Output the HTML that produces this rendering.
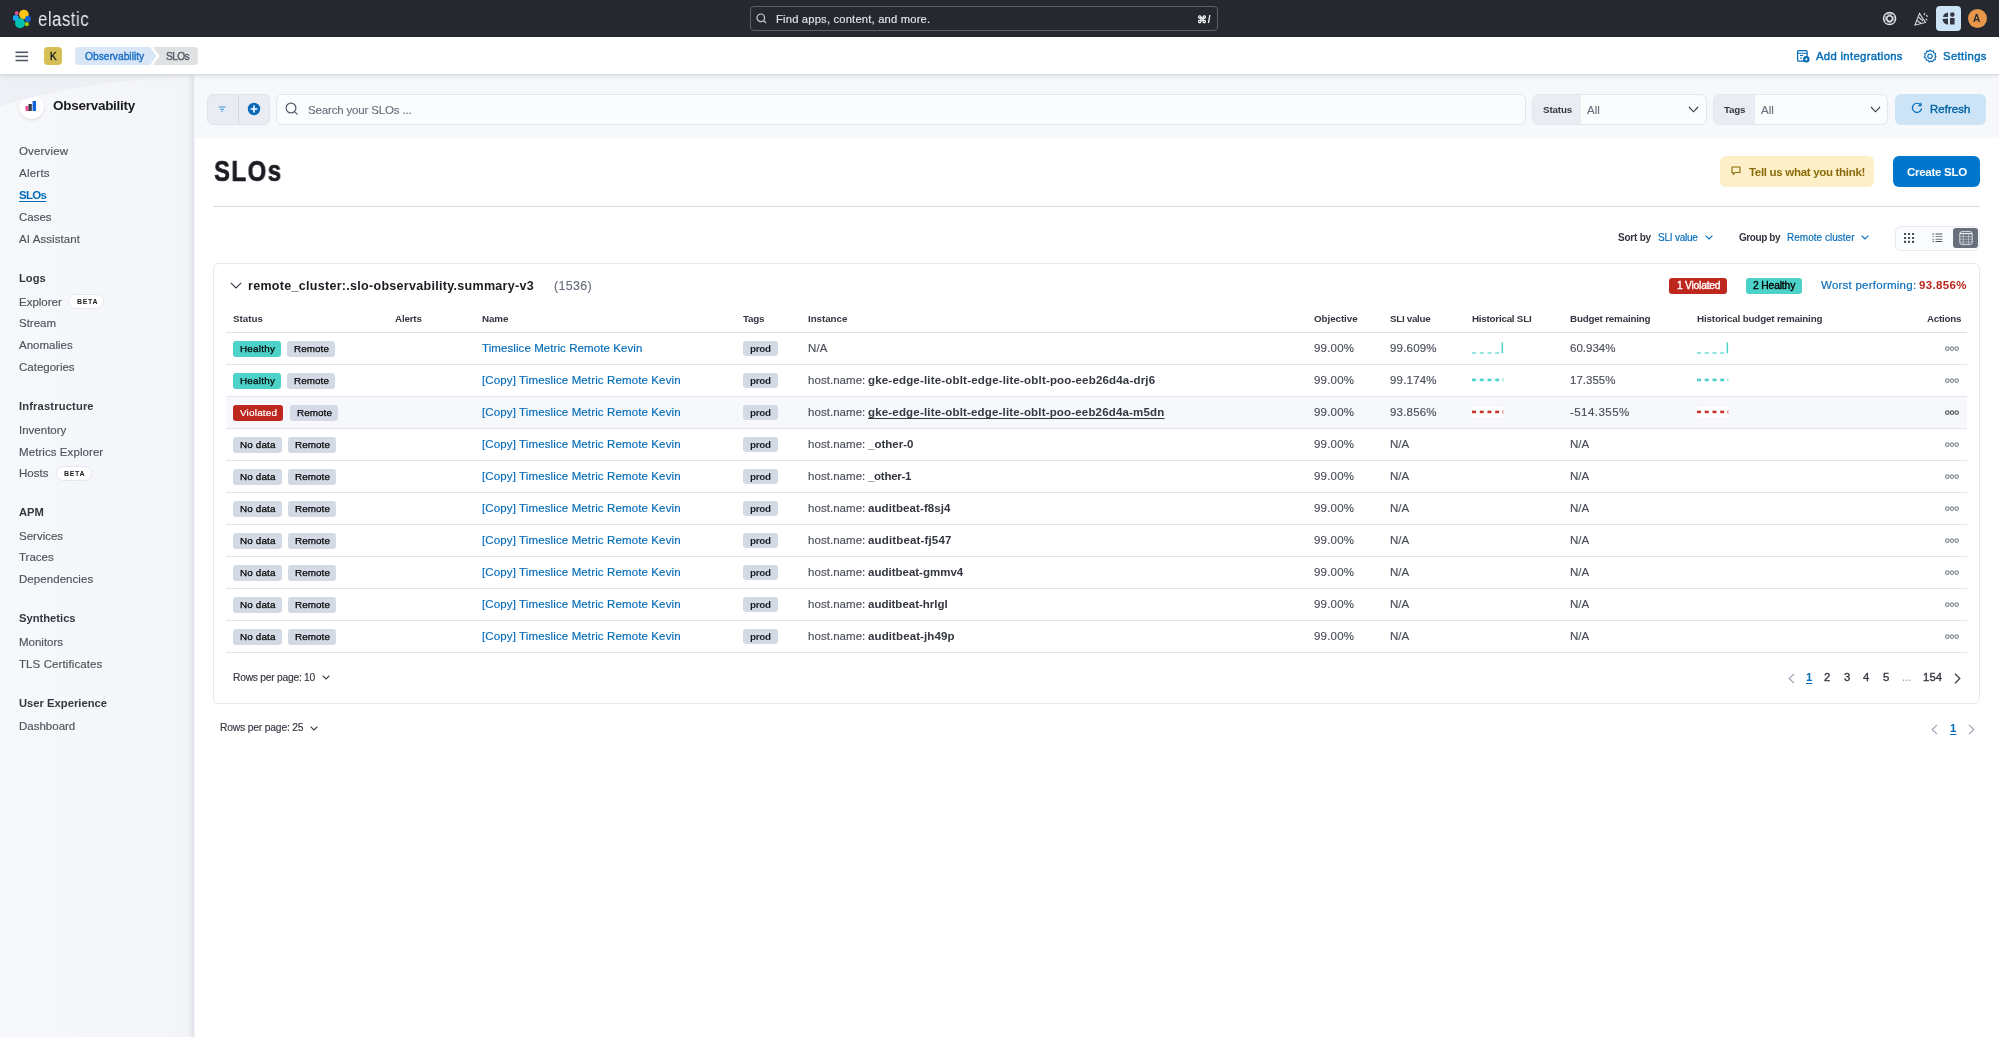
<!DOCTYPE html><html><head><meta charset="utf-8"><title>SLOs</title><style>
html,body{margin:0;padding:0;width:1999px;height:1037px;overflow:hidden;background:#fff;position:relative;font-family:"Liberation Sans",sans-serif;}
.t{position:absolute;line-height:1;white-space:pre;z-index:1;will-change:transform}
svg{z-index:1}
</style></head><body>
<div style="position:absolute;left:0px;top:0px;width:1999px;height:37px;background:#25282f"></div>
<svg style="position:absolute;left:12px;top:9px" width="20" height="20" viewBox="0 0 20 20">
<circle cx="4.7" cy="4.1" r="1.9" fill="#f04e98"/>
<circle cx="11.9" cy="5.5" r="4.8" fill="#fec514"/>
<circle cx="3.8" cy="9" r="3" fill="#1ba9f5"/>
<circle cx="15.9" cy="10" r="2.9" fill="#0b64dd"/>
<circle cx="8" cy="14.2" r="5" fill="#00bfb3"/>
<circle cx="14.8" cy="15.1" r="2.2" fill="#93c90e"/>
</svg>
<div style="position:absolute;left:750px;top:6px;width:468px;height:25px;border:1px solid #5a5f6b;border-radius:4px;box-sizing:border-box;background:#25282f"></div>
<svg style="position:absolute;left:756px;top:13px" width="11" height="11" viewBox="0 0 11 11" fill="none" stroke="#c8ccd3" stroke-width="1.2">
<circle cx="4.8" cy="4.8" r="3.8"/><path d="M7.6 7.6 L10 10"/></svg>
<svg style="position:absolute;left:1882px;top:11px" width="15" height="15" viewBox="0 0 15 15" fill="none" stroke="#dfe2e8">
<circle cx="7.6" cy="7.6" r="6.1" stroke-width="1.3"/><circle cx="7.6" cy="7.6" r="2.9" stroke-width="1.5"/>
<path d="M5.1 3.2 H10.1 M5.1 12 H10.1 M3.2 5.1 V10.1 M12 5.1 V10.1" stroke-width="1" opacity=".8"/></svg>
<svg style="position:absolute;left:1913px;top:11px" width="16" height="16" viewBox="0 0 16 16" fill="none" stroke="#d4d7dc" stroke-width="1.1">
<path d="M2 14 L6.5 2.5 L12.5 11.5 Z"/><path d="M4 9.5 L8.5 12.5 M5.5 6 L10 10"/><path d="M11 2 q1 1 0 2 M13 4 q1.5 .5 1 2 M12.5 8 q1.5 0 1.5 1.5"/></svg>
<div style="position:absolute;left:1936px;top:6px;width:25px;height:25px;background:#cce4f5;border-radius:4px"></div>
<svg style="position:absolute;left:1942px;top:12px" width="14" height="13" viewBox="0 0 14 13">
<path d="M6 0.5 A5.5 5.5 0 0 0 1 5 L6 5 Z" fill="#343741"/>
<path d="M6 6.5 L6 12.5 A5.5 5.5 0 0 1 0.5 7 Z" fill="#343741"/>
<circle cx="10.3" cy="2.6" r="2.3" fill="#343741"/>
<rect x="8" y="6" width="4.6" height="6.6" rx="0.6" fill="#343741"/></svg>
<div style="position:absolute;left:1968px;top:9px;width:19px;height:19px;background:#e7974a;border-radius:50%"></div>
<div style="position:absolute;left:0px;top:37px;width:1999px;height:38px;background:#fff;border-bottom:1px solid #d6dbe5;box-sizing:border-box;box-shadow:0 1px 3px rgba(0,0,0,.07),0 3px 7px rgba(0,0,0,.04);z-index:2"></div>
<svg style="position:absolute;left:15px;top:51px;z-index:3" width="14" height="11" viewBox="0 0 14 11">
<rect x="0.5" y="0.5" width="12.6" height="1.6" fill="#535966"/><rect x="0.5" y="4.6" width="12.6" height="1.6" fill="#535966"/><rect x="0.5" y="8.7" width="12.6" height="1.6" fill="#535966"/></svg>
<div style="position:absolute;left:44px;top:47px;width:18px;height:18px;background:#d6bf57;border-radius:4px;z-index:3"></div>
<svg style="position:absolute;left:75px;top:47px;z-index:3" width="124" height="18" viewBox="0 0 124 18">
<path d="M4 0 H75 L81.5 9 L75 18 H4 A4 4 0 0 1 0 14 V4 A4 4 0 0 1 4 0 Z" fill="#d9e6f5"/>
<path d="M78 0 H119 A4 4 0 0 1 123 4 V14 A4 4 0 0 1 119 18 H78 L84.5 9 Z" fill="#e0e1e3"/></svg>
<svg style="position:absolute;left:1797px;top:50px;z-index:3" width="13" height="13" viewBox="0 0 13 13" fill="none">
<rect x="0.6" y="0.6" width="9.5" height="10.5" rx="1" stroke="#006bb8" stroke-width="1.2"/>
<path d="M0.6 3.2 H10.1 M3 5.5 H6 M3 8 H5" stroke="#006bb8" stroke-width="1.1"/>
<circle cx="9.3" cy="9.3" r="3.2" fill="#006bb8"/><path d="M8 9.3 H10.6 M9.3 8 V10.6" stroke="#fff" stroke-width="0.9"/></svg>
<svg style="position:absolute;left:1923px;top:49px;z-index:3" width="14" height="14" viewBox="0 0 14 14" fill="none" stroke="#006bb8" stroke-width="1.1">
<path d="M7 1 L8.4 2.4 L10.3 2 L10.8 3.9 L12.6 4.6 L12 6.5 L13 7.5 L12 8.8 L12.4 10.6 L10.5 11 L9.6 12.8 L7.8 12 L6.2 12.9 L5.2 11.2 L3.3 11.2 L3 9.3 L1.3 8.3 L2.2 6.6 L1.6 4.8 L3.4 4 L3.8 2.1 L5.7 2.4 Z" stroke-linejoin="round"/>
<circle cx="7" cy="7.2" r="2.2"/></svg>
<div style="position:absolute;left:0px;top:74px;width:195px;height:963px;background:linear-gradient(to right,#f7f8fc 0,#f4f5f9 187px,#e9ebf0 191px,#dfe3ea 193.5px,#fff 195px)"></div>
<svg style="position:absolute;left:0;top:74px" width="193" height="60" viewBox="0 0 193 60">
<path d="M0 0 H193 V2 C120 5 60 15 0 32 Z" fill="#eef0f6"/></svg>
<div style="position:absolute;left:18.5px;top:93.5px;width:25px;height:25px;background:#fff;border-radius:50%;box-shadow:0 1px 3px rgba(0,0,0,.12)"></div>
<svg style="position:absolute;left:24px;top:99px" width="14" height="14" viewBox="0 0 14 14">
<rect x="1.5" y="7" width="3" height="5" fill="#f04e98"/><rect x="4.5" y="5" width="3.3" height="7" fill="#343741"/><rect x="8.6" y="2" width="3.4" height="10" fill="#0b64dd"/></svg>
<div style="position:absolute;left:68.2px;top:294.1px;width:36px;height:15px;background:#fff;border:1px solid #e3e8f2;border-radius:8px;box-sizing:border-box"></div>
<div style="position:absolute;left:55.9px;top:465.7px;width:36px;height:15px;background:#fff;border:1px solid #e3e8f2;border-radius:8px;box-sizing:border-box"></div>
<div style="position:absolute;left:195px;top:74px;width:1804px;height:64px;background:#f7f8fc"></div>
<div style="position:absolute;left:207px;top:94px;width:63px;height:31px;background:#e9edf3;border:1px solid #dfe3ec;border-radius:6px;box-sizing:border-box"></div>
<div style="position:absolute;left:238px;top:95px;width:1px;height:29px;background:#d3dae6"></div>
<svg style="position:absolute;left:217px;top:104px" width="10" height="10" viewBox="0 0 10 10" stroke="#0077cc" stroke-width="1.1" opacity=".75">
<path d="M1.5 3 H8.5 M3 5.2 H7 M4.4 7.4 H5.6"/></svg>
<svg style="position:absolute;left:247px;top:102px" width="14" height="14" viewBox="0 0 14 14">
<circle cx="7" cy="7" r="6.2" fill="#0a69b8"/><path d="M3.6 7 H10.4 M7 3.6 V10.4" stroke="#fff" stroke-width="1.6"/></svg>
<div style="position:absolute;left:276px;top:94px;width:1250px;height:31px;background:#fbfcfd;border:1px solid #e3e6ee;border-radius:6px;box-sizing:border-box"></div>
<svg style="position:absolute;left:285px;top:102px" width="14" height="14" viewBox="0 0 14 14" fill="none" stroke="#535966" stroke-width="1.2">
<circle cx="6" cy="6" r="4.9"/><path d="M9.6 9.6 L12.6 12.6"/></svg>
<div style="position:absolute;left:1532px;top:94px;width:175px;height:31px;background:#fbfcfd;border:1px solid #e3e6ee;border-radius:6px;box-sizing:border-box;overflow:hidden"></div>
<div style="position:absolute;left:1533px;top:95px;width:48px;height:29px;background:#e9edf3;border-radius:5px 0 0 5px"></div>
<svg style="position:absolute;left:1688px;top:106px" width="11" height="7" viewBox="0 0 11 7" fill="none" stroke="#343741" stroke-width="1.1"><path d="M1 1 L5.5 5.8 L10 1"/></svg>
<div style="position:absolute;left:1713px;top:94px;width:175px;height:31px;background:#fbfcfd;border:1px solid #e3e6ee;border-radius:6px;box-sizing:border-box"></div>
<div style="position:absolute;left:1714px;top:95px;width:40.5px;height:29px;background:#e9edf3;border-radius:5px 0 0 5px"></div>
<svg style="position:absolute;left:1869.5px;top:106px" width="11" height="7" viewBox="0 0 11 7" fill="none" stroke="#343741" stroke-width="1.1"><path d="M1 1 L5.5 5.8 L10 1"/></svg>
<div style="position:absolute;left:1895px;top:94px;width:91px;height:31px;background:#cce4f5;border-radius:6px"></div>
<svg style="position:absolute;left:1911px;top:102px" width="12" height="12" viewBox="0 0 12 12" fill="none" stroke="#006bb8" stroke-width="1.2">
<path d="M9.8 3.2 A4.6 4.6 0 1 0 10.6 6.4"/><path d="M10 0.8 V3.6 H7.3"/></svg>
<div style="position:absolute;left:1720px;top:156px;width:154px;height:31px;background:#fdf0c8;border-radius:6px"></div>
<svg style="position:absolute;left:1731px;top:166px" width="10" height="10" viewBox="0 0 10 10" fill="none" stroke="#8a6a0a" stroke-width="1.1">
<path d="M1 1 H9 V6.5 H4 L2.2 8.6 V6.5 H1 Z" stroke-linejoin="round"/></svg>
<div style="position:absolute;left:1893px;top:156px;width:87px;height:31px;background:#0077cc;border-radius:6px"></div>
<div style="position:absolute;left:213px;top:206px;width:1767px;height:1px;background:#d8dee7"></div>
<svg style="position:absolute;left:1705px;top:235px" width="8" height="5" viewBox="0 0 8 5" fill="none" stroke="#006bb8" stroke-width="1.1"><path d="M0.6 0.6 L4 4 L7.4 0.6"/></svg>
<svg style="position:absolute;left:1861px;top:235px" width="8" height="5" viewBox="0 0 8 5" fill="none" stroke="#006bb8" stroke-width="1.1"><path d="M0.6 0.6 L4 4 L7.4 0.6"/></svg>
<div style="position:absolute;left:1895px;top:225.5px;width:85px;height:25px;background:#fbfcfd;border:1px solid #e6e9ef;border-radius:6px;box-sizing:border-box"></div>
<div style="position:absolute;left:1953px;top:228px;width:24.5px;height:20px;background:#69707d;border-radius:3px"></div>
<svg style="position:absolute;left:1903px;top:232px" width="12" height="12" viewBox="0 0 12 12" fill="#4a4e58">
<rect x="1" y="1" width="2.1" height="2.1" rx=".3"/><rect x="5" y="1" width="2.1" height="2.1" rx=".3"/><rect x="9" y="1" width="2.1" height="2.1" rx=".3"/>
<rect x="1" y="4.9" width="2.1" height="2.1" rx=".3"/><rect x="5" y="4.9" width="2.1" height="2.1" rx=".3"/><rect x="9" y="4.9" width="2.1" height="2.1" rx=".3"/>
<rect x="1" y="8.8" width="2.1" height="2.1" rx=".3"/><rect x="5" y="8.8" width="2.1" height="2.1" rx=".3"/><rect x="9" y="8.8" width="2.1" height="2.1" rx=".3"/></svg>
<svg style="position:absolute;left:1932px;top:232px" width="11" height="11" viewBox="0 0 11 11" fill="#4a4e58">
<rect x="0.3" y="1.6" width="1.8" height="1" rx=".4"/><rect x="3.4" y="1.6" width="7" height="1" rx=".4"/>
<rect x="0.3" y="4" width="1.8" height="1" rx=".4" opacity=".7"/><rect x="3.4" y="4" width="7" height="1" rx=".4" opacity=".7"/>
<rect x="0.3" y="6.8" width="1.8" height="1" rx=".4" opacity=".8"/><rect x="3.4" y="6.8" width="7" height="1" rx=".4" opacity=".8"/>
<rect x="0.3" y="9" width="1.8" height="1" rx=".4"/><rect x="3.4" y="9" width="7" height="1" rx=".4"/></svg>
<svg style="position:absolute;left:1958.5px;top:231px" width="14" height="14" viewBox="0 0 14 14" fill="none" stroke="#e8eaee" stroke-width=".9">
<rect x="0.8" y="0.6" width="12.4" height="12.8" rx="2.2"/><path d="M0.8 2.6 H13.2" stroke-width="1.2"/>
<path d="M0.8 5.5 H13.2 M0.8 8.2 H13.2 M0.8 11 H13.2 M4.4 2.6 V13.4 M9.6 2.6 V13.4" opacity=".55"/></svg>
<div style="position:absolute;left:213px;top:263px;width:767px;height:441px;display:none"></div>
<div style="position:absolute;left:213px;top:263px;width:1767px;height:441px;border:1px solid #e3e8f2;border-radius:6px;box-sizing:border-box;background:#fff"></div>
<svg style="position:absolute;left:230px;top:282px" width="12" height="7" viewBox="0 0 12 7" fill="none" stroke="#343741" stroke-width="1.1"><path d="M0.8 0.8 L6 6 L11.2 0.8"/></svg>
<div style="position:absolute;left:1669.4px;top:278px;width:58px;height:15.7px;background:#bd271e;border-radius:3px"></div>
<div style="position:absolute;left:1746px;top:278px;width:56px;height:15.7px;background:#4dd2ca;border-radius:3px"></div>
<div style="position:absolute;left:226px;top:332px;width:1741px;height:1px;background:#dce1ea"></div>
<div style="position:absolute;left:226px;top:364px;width:1741px;height:1px;background:#e1e6ee"></div>
<div style="position:absolute;left:232.5px;top:341px;width:48.5px;height:15.7px;background:#4dd2ca;border-radius:3px"></div>
<div style="position:absolute;left:287.2px;top:341px;width:48.3px;height:15.7px;background:#d3dae6;border-radius:3px"></div>
<div style="position:absolute;left:743px;top:340.8px;width:34.5px;height:15.5px;background:#d3dae6;border-radius:3px"></div>
<svg style="position:absolute;left:1472px;top:333px" width="34" height="31" viewBox="0 0 34 31"><rect x="0.00" y="19" width="4" height="2" fill="#4dd2ca" opacity=".6"/><rect x="7.73" y="19" width="4" height="2" fill="#4dd2ca" opacity=".6"/><rect x="15.46" y="19" width="4" height="2" fill="#4dd2ca" opacity=".6"/><rect x="23.19" y="19" width="4" height="2" fill="#4dd2ca" opacity=".6"/><rect x="29.6" y="9.4" width="1.5" height="11" fill="#4dd2ca"/></svg>
<svg style="position:absolute;left:1697.4px;top:333px" width="34" height="31" viewBox="0 0 34 31"><rect x="0.00" y="19" width="4" height="2" fill="#4dd2ca" opacity=".6"/><rect x="7.73" y="19" width="4" height="2" fill="#4dd2ca" opacity=".6"/><rect x="15.46" y="19" width="4" height="2" fill="#4dd2ca" opacity=".6"/><rect x="23.19" y="19" width="4" height="2" fill="#4dd2ca" opacity=".6"/><rect x="29.6" y="9.4" width="1.5" height="11" fill="#4dd2ca"/></svg>
<svg style="position:absolute;left:1944.5px;top:346px" width="14" height="6" viewBox="0 0 14 6" fill="none" stroke="#69707d" stroke-width="1">
<rect x="0.7" y="1" width="3.2" height="3.2" rx=".6"/><rect x="5.4" y="1" width="3.2" height="3.2" rx=".6"/><rect x="10.1" y="1" width="3.2" height="3.2" rx=".6"/></svg>
<div style="position:absolute;left:226px;top:396px;width:1741px;height:1px;background:#e1e6ee"></div>
<div style="position:absolute;left:232.5px;top:373px;width:48.5px;height:15.7px;background:#4dd2ca;border-radius:3px"></div>
<div style="position:absolute;left:287.2px;top:373px;width:48.3px;height:15.7px;background:#d3dae6;border-radius:3px"></div>
<div style="position:absolute;left:743px;top:372.8px;width:34.5px;height:15.5px;background:#d3dae6;border-radius:3px"></div>
<svg style="position:absolute;left:1472px;top:365px" width="34" height="31" viewBox="0 0 34 31"><rect x="0.00" y="13.6" width="4" height="2.6" fill="#4dd2ca"/><rect x="7.73" y="13.6" width="4" height="2.6" fill="#4dd2ca"/><rect x="15.46" y="13.6" width="4" height="2.6" fill="#4dd2ca"/><rect x="23.19" y="13.6" width="4" height="2.6" fill="#4dd2ca"/><path d="M31.3 13.2 Q29.6 14.9 31.3 16.6" stroke="#4dd2ca" stroke-width="1" fill="none" opacity=".7"/></svg>
<svg style="position:absolute;left:1697.4px;top:365px" width="34" height="31" viewBox="0 0 34 31"><rect x="0.00" y="13.6" width="4" height="2.6" fill="#4dd2ca"/><rect x="7.73" y="13.6" width="4" height="2.6" fill="#4dd2ca"/><rect x="15.46" y="13.6" width="4" height="2.6" fill="#4dd2ca"/><rect x="23.19" y="13.6" width="4" height="2.6" fill="#4dd2ca"/><path d="M31.3 13.2 Q29.6 14.9 31.3 16.6" stroke="#4dd2ca" stroke-width="1" fill="none" opacity=".7"/></svg>
<svg style="position:absolute;left:1944.5px;top:378px" width="14" height="6" viewBox="0 0 14 6" fill="none" stroke="#69707d" stroke-width="1">
<rect x="0.7" y="1" width="3.2" height="3.2" rx=".6"/><rect x="5.4" y="1" width="3.2" height="3.2" rx=".6"/><rect x="10.1" y="1" width="3.2" height="3.2" rx=".6"/></svg>
<div style="position:absolute;left:226px;top:397px;width:1741px;height:31px;background:#f7f8fc"></div>
<div style="position:absolute;left:226px;top:428px;width:1741px;height:1px;background:#e1e6ee"></div>
<div style="position:absolute;left:232.5px;top:405px;width:50.5px;height:15.7px;background:#bd271e;border-radius:3px"></div>
<div style="position:absolute;left:290px;top:405px;width:48.3px;height:15.7px;background:#d3dae6;border-radius:3px"></div>
<div style="position:absolute;left:743px;top:404.8px;width:34.5px;height:15.5px;background:#d3dae6;border-radius:3px"></div>
<svg style="position:absolute;left:1472px;top:397px" width="34" height="31" viewBox="0 0 34 31"><rect x="0" y="9.8" width="31.5" height="10.7" fill="#fff"/><rect x="0.00" y="13.6" width="4" height="2.6" fill="#c9372c"/><rect x="7.73" y="13.6" width="4" height="2.6" fill="#c9372c"/><rect x="15.46" y="13.6" width="4" height="2.6" fill="#c9372c"/><rect x="23.19" y="13.6" width="4" height="2.6" fill="#c9372c"/><path d="M31.3 13.2 Q29.6 14.9 31.3 16.6" stroke="#c9372c" stroke-width="1" fill="none" opacity=".7"/></svg>
<svg style="position:absolute;left:1697.4px;top:397px" width="34" height="31" viewBox="0 0 34 31"><rect x="0" y="9.8" width="31.5" height="10.7" fill="#fff"/><rect x="0.00" y="13.6" width="4" height="2.6" fill="#c9372c"/><rect x="7.73" y="13.6" width="4" height="2.6" fill="#c9372c"/><rect x="15.46" y="13.6" width="4" height="2.6" fill="#c9372c"/><rect x="23.19" y="13.6" width="4" height="2.6" fill="#c9372c"/><path d="M31.3 13.2 Q29.6 14.9 31.3 16.6" stroke="#c9372c" stroke-width="1" fill="none" opacity=".7"/></svg>
<svg style="position:absolute;left:1944.5px;top:410px" width="14" height="6" viewBox="0 0 14 6" fill="none" stroke="#343741" stroke-width="1">
<rect x="0.7" y="1" width="3.2" height="3.2" rx=".6"/><rect x="5.4" y="1" width="3.2" height="3.2" rx=".6"/><rect x="10.1" y="1" width="3.2" height="3.2" rx=".6"/></svg>
<div style="position:absolute;left:226px;top:460px;width:1741px;height:1px;background:#e1e6ee"></div>
<div style="position:absolute;left:232.5px;top:437px;width:49px;height:15.7px;background:#d3dae6;border-radius:3px"></div>
<div style="position:absolute;left:287.9px;top:437px;width:48.3px;height:15.7px;background:#d3dae6;border-radius:3px"></div>
<div style="position:absolute;left:743px;top:436.8px;width:34.5px;height:15.5px;background:#d3dae6;border-radius:3px"></div>
<svg style="position:absolute;left:1944.5px;top:442px" width="14" height="6" viewBox="0 0 14 6" fill="none" stroke="#69707d" stroke-width="1">
<rect x="0.7" y="1" width="3.2" height="3.2" rx=".6"/><rect x="5.4" y="1" width="3.2" height="3.2" rx=".6"/><rect x="10.1" y="1" width="3.2" height="3.2" rx=".6"/></svg>
<div style="position:absolute;left:226px;top:492px;width:1741px;height:1px;background:#e1e6ee"></div>
<div style="position:absolute;left:232.5px;top:469px;width:49px;height:15.7px;background:#d3dae6;border-radius:3px"></div>
<div style="position:absolute;left:287.9px;top:469px;width:48.3px;height:15.7px;background:#d3dae6;border-radius:3px"></div>
<div style="position:absolute;left:743px;top:468.8px;width:34.5px;height:15.5px;background:#d3dae6;border-radius:3px"></div>
<svg style="position:absolute;left:1944.5px;top:474px" width="14" height="6" viewBox="0 0 14 6" fill="none" stroke="#69707d" stroke-width="1">
<rect x="0.7" y="1" width="3.2" height="3.2" rx=".6"/><rect x="5.4" y="1" width="3.2" height="3.2" rx=".6"/><rect x="10.1" y="1" width="3.2" height="3.2" rx=".6"/></svg>
<div style="position:absolute;left:226px;top:524px;width:1741px;height:1px;background:#e1e6ee"></div>
<div style="position:absolute;left:232.5px;top:501px;width:49px;height:15.7px;background:#d3dae6;border-radius:3px"></div>
<div style="position:absolute;left:287.9px;top:501px;width:48.3px;height:15.7px;background:#d3dae6;border-radius:3px"></div>
<div style="position:absolute;left:743px;top:500.8px;width:34.5px;height:15.5px;background:#d3dae6;border-radius:3px"></div>
<svg style="position:absolute;left:1944.5px;top:506px" width="14" height="6" viewBox="0 0 14 6" fill="none" stroke="#69707d" stroke-width="1">
<rect x="0.7" y="1" width="3.2" height="3.2" rx=".6"/><rect x="5.4" y="1" width="3.2" height="3.2" rx=".6"/><rect x="10.1" y="1" width="3.2" height="3.2" rx=".6"/></svg>
<div style="position:absolute;left:226px;top:556px;width:1741px;height:1px;background:#e1e6ee"></div>
<div style="position:absolute;left:232.5px;top:533px;width:49px;height:15.7px;background:#d3dae6;border-radius:3px"></div>
<div style="position:absolute;left:287.9px;top:533px;width:48.3px;height:15.7px;background:#d3dae6;border-radius:3px"></div>
<div style="position:absolute;left:743px;top:532.8px;width:34.5px;height:15.5px;background:#d3dae6;border-radius:3px"></div>
<svg style="position:absolute;left:1944.5px;top:538px" width="14" height="6" viewBox="0 0 14 6" fill="none" stroke="#69707d" stroke-width="1">
<rect x="0.7" y="1" width="3.2" height="3.2" rx=".6"/><rect x="5.4" y="1" width="3.2" height="3.2" rx=".6"/><rect x="10.1" y="1" width="3.2" height="3.2" rx=".6"/></svg>
<div style="position:absolute;left:226px;top:588px;width:1741px;height:1px;background:#e1e6ee"></div>
<div style="position:absolute;left:232.5px;top:565px;width:49px;height:15.7px;background:#d3dae6;border-radius:3px"></div>
<div style="position:absolute;left:287.9px;top:565px;width:48.3px;height:15.7px;background:#d3dae6;border-radius:3px"></div>
<div style="position:absolute;left:743px;top:564.8px;width:34.5px;height:15.5px;background:#d3dae6;border-radius:3px"></div>
<svg style="position:absolute;left:1944.5px;top:570px" width="14" height="6" viewBox="0 0 14 6" fill="none" stroke="#69707d" stroke-width="1">
<rect x="0.7" y="1" width="3.2" height="3.2" rx=".6"/><rect x="5.4" y="1" width="3.2" height="3.2" rx=".6"/><rect x="10.1" y="1" width="3.2" height="3.2" rx=".6"/></svg>
<div style="position:absolute;left:226px;top:620px;width:1741px;height:1px;background:#e1e6ee"></div>
<div style="position:absolute;left:232.5px;top:597px;width:49px;height:15.7px;background:#d3dae6;border-radius:3px"></div>
<div style="position:absolute;left:287.9px;top:597px;width:48.3px;height:15.7px;background:#d3dae6;border-radius:3px"></div>
<div style="position:absolute;left:743px;top:596.8px;width:34.5px;height:15.5px;background:#d3dae6;border-radius:3px"></div>
<svg style="position:absolute;left:1944.5px;top:602px" width="14" height="6" viewBox="0 0 14 6" fill="none" stroke="#69707d" stroke-width="1">
<rect x="0.7" y="1" width="3.2" height="3.2" rx=".6"/><rect x="5.4" y="1" width="3.2" height="3.2" rx=".6"/><rect x="10.1" y="1" width="3.2" height="3.2" rx=".6"/></svg>
<div style="position:absolute;left:226px;top:652px;width:1741px;height:1px;background:#e1e6ee"></div>
<div style="position:absolute;left:232.5px;top:629px;width:49px;height:15.7px;background:#d3dae6;border-radius:3px"></div>
<div style="position:absolute;left:287.9px;top:629px;width:48.3px;height:15.7px;background:#d3dae6;border-radius:3px"></div>
<div style="position:absolute;left:743px;top:628.8px;width:34.5px;height:15.5px;background:#d3dae6;border-radius:3px"></div>
<svg style="position:absolute;left:1944.5px;top:634px" width="14" height="6" viewBox="0 0 14 6" fill="none" stroke="#69707d" stroke-width="1">
<rect x="0.7" y="1" width="3.2" height="3.2" rx=".6"/><rect x="5.4" y="1" width="3.2" height="3.2" rx=".6"/><rect x="10.1" y="1" width="3.2" height="3.2" rx=".6"/></svg>
<svg style="position:absolute;left:321.5px;top:675px" width="8" height="5" viewBox="0 0 8 5" fill="none" stroke="#343741" stroke-width="1.1"><path d="M0.6 0.6 L4 4 L7.4 0.6"/></svg>
<svg style="position:absolute;left:1787.5px;top:672.5px" width="7" height="11" viewBox="0 0 7 11" fill="none" stroke="#98a1b3" stroke-width="1.1"><path d="M6 0.8 L1.2 5.5 L6 10.2"/></svg>
<svg style="position:absolute;left:1954px;top:672.5px" width="7" height="11" viewBox="0 0 7 11" fill="none" stroke="#343741" stroke-width="1.2"><path d="M1 0.8 L5.8 5.5 L1 10.2"/></svg>
<svg style="position:absolute;left:309.5px;top:726px" width="8" height="5" viewBox="0 0 8 5" fill="none" stroke="#343741" stroke-width="1.1"><path d="M0.6 0.6 L4 4 L7.4 0.6"/></svg>
<svg style="position:absolute;left:1931px;top:723.5px" width="7" height="11" viewBox="0 0 7 11" fill="none" stroke="#98a1b3" stroke-width="1.1"><path d="M6 0.8 L1.2 5.5 L6 10.2"/></svg>
<svg style="position:absolute;left:1967.5px;top:723.5px" width="7" height="11" viewBox="0 0 7 11" fill="none" stroke="#98a1b3" stroke-width="1.1"><path d="M1 0.8 L5.8 5.5 L1 10.2"/></svg>
<div class="t" id="t0" style="left:37.80px;top:8px;line-height:22px;font-size:20px;font-weight:400;color:#e8ebf0;letter-spacing:0.590px;transform:scaleX(0.84);transform-origin:0 0;-webkit-text-stroke:0 #fff">elastic</div>
<div class="t" id="t1" style="left:775.50px;top:13px;line-height:12px;font-size:11.2px;font-weight:400;color:#dfe5ef;letter-spacing:0.195px;-webkit-text-stroke:0.15px currentColor;">Find apps, content, and more.</div>
<div class="t" id="t2" style="left:1197.00px;top:14px;line-height:11px;font-size:10px;font-weight:700;color:#ffffff;letter-spacing:0.806px;">⌘/</div>
<div class="t" id="t3" style="left:1973.20px;top:13px;line-height:11px;font-size:10px;font-weight:700;color:#25282f;">A</div>
<div class="t" id="t4" style="left:50.20px;top:51px;line-height:11px;font-size:10px;font-weight:400;color:#1a1c21;z-index:3;-webkit-text-stroke:0.35px currentColor">K</div>
<div class="t" id="t5" style="left:84.75px;top:51px;line-height:11px;font-size:10.2px;font-weight:400;color:#1a6fc7;letter-spacing:0.022px;z-index:3;-webkit-text-stroke:0.4px currentColor">Observability</div>
<div class="t" id="t6" style="left:165.80px;top:51px;line-height:11px;font-size:10.2px;font-weight:400;color:#535966;letter-spacing:-0.663px;z-index:3;-webkit-text-stroke:0.4px currentColor">SLOs</div>
<div class="t" id="t7" style="left:1816.20px;top:50px;line-height:12px;font-size:11.3px;font-weight:400;color:#006bb8;letter-spacing:0.324px;z-index:3;-webkit-text-stroke:0.4px currentColor">Add integrations</div>
<div class="t" id="t8" style="left:1943.20px;top:50px;line-height:12px;font-size:11.3px;font-weight:400;color:#006bb8;letter-spacing:0.382px;z-index:3;-webkit-text-stroke:0.4px currentColor">Settings</div>
<div class="t" id="t9" style="left:53.30px;top:98px;line-height:15px;font-size:13.5px;font-weight:700;color:#1a1c21;letter-spacing:-0.270px;">Observability</div>
<div class="t" id="t10" style="left:18.80px;top:145px;line-height:12px;font-size:11.5px;font-weight:400;color:#4d525c;letter-spacing:0.151px;-webkit-text-stroke:0.15px currentColor;">Overview</div>
<div class="t" id="t11" style="left:18.80px;top:167px;line-height:12px;font-size:11.5px;font-weight:400;color:#4d525c;letter-spacing:0.238px;-webkit-text-stroke:0.15px currentColor;">Alerts</div>
<div class="t" id="t12" style="left:18.80px;top:189px;line-height:12px;font-size:11.5px;font-weight:700;color:#006bb8;letter-spacing:-0.681px;text-decoration:underline;text-underline-offset:2px">SLOs</div>
<div class="t" id="t13" style="left:18.80px;top:211px;line-height:12px;font-size:11.5px;font-weight:400;color:#4d525c;-webkit-text-stroke:0.15px currentColor;">Cases</div>
<div class="t" id="t14" style="left:18.80px;top:233px;line-height:12px;font-size:11.5px;font-weight:400;color:#4d525c;letter-spacing:0.082px;-webkit-text-stroke:0.15px currentColor;">AI Assistant</div>
<div class="t" id="t15" style="left:18.80px;top:272px;line-height:12px;font-size:11.2px;font-weight:700;color:#343741;">Logs</div>
<div class="t" id="t16" style="left:18.80px;top:296px;line-height:12px;font-size:11.5px;font-weight:400;color:#4d525c;-webkit-text-stroke:0.15px currentColor;">Explorer</div>
<div class="t" id="t17" style="left:18.80px;top:317px;line-height:12px;font-size:11.5px;font-weight:400;color:#4d525c;-webkit-text-stroke:0.15px currentColor;">Stream</div>
<div class="t" id="t18" style="left:18.80px;top:339px;line-height:12px;font-size:11.5px;font-weight:400;color:#4d525c;-webkit-text-stroke:0.15px currentColor;">Anomalies</div>
<div class="t" id="t19" style="left:18.80px;top:361px;line-height:12px;font-size:11.5px;font-weight:400;color:#4d525c;-webkit-text-stroke:0.15px currentColor;">Categories</div>
<div class="t" id="t20" style="left:18.80px;top:400px;line-height:12px;font-size:11.2px;font-weight:700;color:#343741;letter-spacing:0.143px;">Infrastructure</div>
<div class="t" id="t21" style="left:18.80px;top:424px;line-height:12px;font-size:11.5px;font-weight:400;color:#4d525c;-webkit-text-stroke:0.15px currentColor;">Inventory</div>
<div class="t" id="t22" style="left:18.80px;top:446px;line-height:12px;font-size:11.5px;font-weight:400;color:#4d525c;letter-spacing:0.075px;-webkit-text-stroke:0.15px currentColor;">Metrics Explorer</div>
<div class="t" id="t23" style="left:18.80px;top:467px;line-height:12px;font-size:11.5px;font-weight:400;color:#4d525c;-webkit-text-stroke:0.15px currentColor;">Hosts</div>
<div class="t" id="t24" style="left:18.80px;top:506px;line-height:12px;font-size:11.2px;font-weight:700;color:#343741;">APM</div>
<div class="t" id="t25" style="left:18.80px;top:530px;line-height:12px;font-size:11.5px;font-weight:400;color:#4d525c;-webkit-text-stroke:0.15px currentColor;">Services</div>
<div class="t" id="t26" style="left:18.80px;top:551px;line-height:12px;font-size:11.5px;font-weight:400;color:#4d525c;-webkit-text-stroke:0.15px currentColor;">Traces</div>
<div class="t" id="t27" style="left:18.80px;top:573px;line-height:12px;font-size:11.5px;font-weight:400;color:#4d525c;letter-spacing:0.061px;-webkit-text-stroke:0.15px currentColor;">Dependencies</div>
<div class="t" id="t28" style="left:18.80px;top:612px;line-height:12px;font-size:11.2px;font-weight:700;color:#343741;">Synthetics</div>
<div class="t" id="t29" style="left:18.80px;top:636px;line-height:12px;font-size:11.5px;font-weight:400;color:#4d525c;-webkit-text-stroke:0.15px currentColor;">Monitors</div>
<div class="t" id="t30" style="left:18.80px;top:658px;line-height:12px;font-size:11.5px;font-weight:400;color:#4d525c;letter-spacing:0.100px;-webkit-text-stroke:0.15px currentColor;">TLS Certificates</div>
<div class="t" id="t31" style="left:18.80px;top:697px;line-height:12px;font-size:11.2px;font-weight:700;color:#343741;letter-spacing:0.026px;">User Experience</div>
<div class="t" id="t32" style="left:18.80px;top:720px;line-height:12px;font-size:11.5px;font-weight:400;color:#4d525c;-webkit-text-stroke:0.15px currentColor;">Dashboard</div>
<div class="t" id="t33" style="left:76.50px;top:298px;line-height:7px;font-size:7px;font-weight:700;color:#1a1c21;letter-spacing:0.685px;">BETA</div>
<div class="t" id="t34" style="left:64.20px;top:470px;line-height:7px;font-size:7px;font-weight:700;color:#1a1c21;letter-spacing:0.685px;">BETA</div>
<div class="t" id="t35" style="left:307.90px;top:104px;line-height:12px;font-size:11.5px;font-weight:400;color:#69707d;letter-spacing:-0.161px;-webkit-text-stroke:0.15px currentColor;">Search your SLOs ...</div>
<div class="t" id="t36" style="left:1542.70px;top:104px;line-height:11px;font-size:9.8px;font-weight:700;color:#343741;letter-spacing:-0.151px;">Status</div>
<div class="t" id="t37" style="left:1587.40px;top:104px;line-height:12px;font-size:11.5px;font-weight:400;color:#69707d;-webkit-text-stroke:0.15px currentColor;">All</div>
<div class="t" id="t38" style="left:1723.90px;top:104px;line-height:11px;font-size:9.8px;font-weight:700;color:#343741;letter-spacing:-0.248px;">Tags</div>
<div class="t" id="t39" style="left:1761.40px;top:104px;line-height:12px;font-size:11.5px;font-weight:400;color:#69707d;-webkit-text-stroke:0.15px currentColor;">All</div>
<div class="t" id="t40" style="left:1929.80px;top:103px;line-height:12px;font-size:11.3px;font-weight:400;color:#0061a6;letter-spacing:0.123px;-webkit-text-stroke:0.4px currentColor">Refresh</div>
<div class="t" id="t41" style="left:213.50px;top:155px;line-height:32px;font-size:28.6px;font-weight:700;color:#1a1c21;letter-spacing:1.729px;transform:scaleX(0.84);transform-origin:0 0;-webkit-text-stroke:0.6px currentColor">SLOs</div>
<div class="t" id="t42" style="left:1749.00px;top:166px;line-height:12px;font-size:11.5px;font-weight:700;color:#8a6a0a;letter-spacing:-0.309px;">Tell us what you think!</div>
<div class="t" id="t43" style="left:1906.60px;top:166px;line-height:12px;font-size:11.5px;font-weight:700;color:#ffffff;letter-spacing:-0.272px;">Create SLO</div>
<div class="t" id="t44" style="left:1618.40px;top:232px;line-height:11px;font-size:10px;font-weight:700;color:#343741;letter-spacing:-0.226px;">Sort by</div>
<div class="t" id="t45" style="left:1657.90px;top:232px;line-height:11px;font-size:10px;font-weight:400;color:#006bb8;letter-spacing:-0.225px;-webkit-text-stroke:0.15px currentColor;">SLI value</div>
<div class="t" id="t46" style="left:1738.70px;top:232px;line-height:11px;font-size:10px;font-weight:700;color:#343741;letter-spacing:-0.422px;">Group by</div>
<div class="t" id="t47" style="left:1786.60px;top:232px;line-height:11px;font-size:10px;font-weight:400;color:#006bb8;letter-spacing:0.019px;-webkit-text-stroke:0.15px currentColor;">Remote cluster</div>
<div class="t" id="t48" style="left:248.40px;top:279px;line-height:14px;font-size:12.5px;font-weight:700;color:#1a1c21;letter-spacing:0.300px;">remote_cluster:.slo-observability.summary-v3</div>
<div class="t" id="t49" style="left:553.50px;top:279px;line-height:14px;font-size:12.5px;font-weight:400;color:#69707d;letter-spacing:0.292px;-webkit-text-stroke:0.15px currentColor;">(1536)</div>
<div class="t" id="t50" style="left:1676.50px;top:280px;line-height:11px;font-size:10.3px;font-weight:400;color:#ffffff;letter-spacing:-0.236px;-webkit-text-stroke:0.35px currentColor">1 Violated</div>
<div class="t" id="t51" style="left:1753.30px;top:280px;line-height:11px;font-size:10.3px;font-weight:400;color:#000000;letter-spacing:-0.151px;-webkit-text-stroke:0.35px currentColor">2 Healthy</div>
<div class="t" id="t52" style="left:1821.40px;top:279px;line-height:12px;font-size:11.5px;font-weight:400;color:#006bb8;letter-spacing:0.245px;-webkit-text-stroke:0.15px currentColor;">Worst performing:</div>
<div class="t" id="t53" style="left:1919.40px;top:279px;line-height:12px;font-size:11.5px;font-weight:700;color:#bd271e;letter-spacing:0.332px;">93.856%</div>
<div class="t" id="t54" style="left:232.50px;top:313px;line-height:11px;font-size:9.8px;font-weight:700;color:#343741;">Status</div>
<div class="t" id="t55" style="left:395.00px;top:313px;line-height:11px;font-size:9.8px;font-weight:700;color:#343741;letter-spacing:-0.184px;">Alerts</div>
<div class="t" id="t56" style="left:481.75px;top:313px;line-height:11px;font-size:9.8px;font-weight:700;color:#343741;letter-spacing:-0.116px;">Name</div>
<div class="t" id="t57" style="left:743.00px;top:313px;line-height:11px;font-size:9.8px;font-weight:700;color:#343741;letter-spacing:-0.267px;">Tags</div>
<div class="t" id="t58" style="left:807.50px;top:313px;line-height:11px;font-size:9.8px;font-weight:700;color:#343741;letter-spacing:-0.058px;">Instance</div>
<div class="t" id="t59" style="left:1313.60px;top:313px;line-height:11px;font-size:9.8px;font-weight:700;color:#343741;letter-spacing:-0.063px;">Objective</div>
<div class="t" id="t60" style="left:1390.00px;top:313px;line-height:11px;font-size:9.8px;font-weight:700;color:#343741;letter-spacing:-0.302px;">SLI value</div>
<div class="t" id="t61" style="left:1472.00px;top:313px;line-height:11px;font-size:9.8px;font-weight:700;color:#343741;letter-spacing:-0.231px;">Historical SLI</div>
<div class="t" id="t62" style="left:1570.40px;top:313px;line-height:11px;font-size:9.8px;font-weight:700;color:#343741;letter-spacing:-0.179px;">Budget remaining</div>
<div class="t" id="t63" style="left:1697.40px;top:313px;line-height:11px;font-size:9.8px;font-weight:700;color:#343741;letter-spacing:-0.156px;">Historical budget remaining</div>
<div class="t" id="t64" style="left:1926.50px;top:313px;line-height:11px;font-size:9.8px;font-weight:700;color:#343741;letter-spacing:-0.255px;">Actions</div>
<div class="t" id="t65" style="left:239.60px;top:343px;line-height:11px;font-size:9.9px;font-weight:400;color:#000;letter-spacing:0.235px;-webkit-text-stroke:0.25px currentColor">Healthy</div>
<div class="t" id="t66" style="left:294.20px;top:343px;line-height:11px;font-size:9.9px;font-weight:400;color:#000;letter-spacing:0.064px;-webkit-text-stroke:0.25px currentColor">Remote</div>
<div class="t" id="t67" style="left:482.00px;top:342px;line-height:12px;font-size:11.5px;font-weight:400;color:#006bb8;letter-spacing:0.081px;-webkit-text-stroke:0.15px currentColor;">Timeslice Metric Remote Kevin</div>
<div class="t" id="t68" style="left:750.00px;top:343px;line-height:11px;font-size:9.9px;font-weight:700;color:#1a1c21;letter-spacing:-0.283px;">prod</div>
<div class="t" id="t69" style="left:807.50px;top:342px;line-height:12px;font-size:11.5px;font-weight:400;color:#4a4e58;letter-spacing:0.087px;-webkit-text-stroke:0.15px currentColor;">N/A</div>
<div class="t" id="t70" style="left:1313.60px;top:342px;line-height:12px;font-size:11.5px;font-weight:400;color:#4a4e58;letter-spacing:0.199px;-webkit-text-stroke:0.15px currentColor;">99.00%</div>
<div class="t" id="t71" style="left:1390.00px;top:342px;line-height:12px;font-size:11.5px;font-weight:400;color:#4a4e58;letter-spacing:0.198px;-webkit-text-stroke:0.15px currentColor;">99.609%</div>
<div class="t" id="t72" style="left:1570.40px;top:342px;line-height:12px;font-size:11.5px;font-weight:400;color:#4a4e58;-webkit-text-stroke:0.15px currentColor;">60.934%</div>
<div class="t" id="t73" style="left:239.60px;top:375px;line-height:11px;font-size:9.9px;font-weight:400;color:#000;letter-spacing:0.235px;-webkit-text-stroke:0.25px currentColor">Healthy</div>
<div class="t" id="t74" style="left:294.20px;top:375px;line-height:11px;font-size:9.9px;font-weight:400;color:#000;letter-spacing:0.064px;-webkit-text-stroke:0.25px currentColor">Remote</div>
<div class="t" id="t75" style="left:482.00px;top:374px;line-height:12px;font-size:11.5px;font-weight:400;color:#006bb8;letter-spacing:0.123px;-webkit-text-stroke:0.15px currentColor;">[Copy] Timeslice Metric Remote Kevin</div>
<div class="t" id="t76" style="left:750.00px;top:375px;line-height:11px;font-size:9.9px;font-weight:700;color:#1a1c21;letter-spacing:-0.283px;">prod</div>
<div class="t" id="t77" style="left:807.50px;top:374px;line-height:12px;font-size:11.5px;font-weight:400;color:#4a4e58;letter-spacing:0.044px;-webkit-text-stroke:0.15px currentColor;">host.name:</div>
<div class="t" id="t78" style="left:868.00px;top:374px;line-height:12px;font-size:11.5px;font-weight:700;color:#343741;letter-spacing:0.183px;">gke-edge-lite-oblt-edge-lite-oblt-poo-eeb26d4a-drj6</div>
<div class="t" id="t79" style="left:1313.60px;top:374px;line-height:12px;font-size:11.5px;font-weight:400;color:#4a4e58;letter-spacing:0.199px;-webkit-text-stroke:0.15px currentColor;">99.00%</div>
<div class="t" id="t80" style="left:1390.00px;top:374px;line-height:12px;font-size:11.5px;font-weight:400;color:#4a4e58;letter-spacing:0.198px;-webkit-text-stroke:0.15px currentColor;">99.174%</div>
<div class="t" id="t81" style="left:1570.40px;top:374px;line-height:12px;font-size:11.5px;font-weight:400;color:#4a4e58;-webkit-text-stroke:0.15px currentColor;">17.355%</div>
<div class="t" id="t82" style="left:239.60px;top:407px;line-height:11px;font-size:9.9px;font-weight:400;color:#fff;letter-spacing:0.212px;-webkit-text-stroke:0.2px currentColor">Violated</div>
<div class="t" id="t83" style="left:297.00px;top:407px;line-height:11px;font-size:9.9px;font-weight:400;color:#000;letter-spacing:0.064px;-webkit-text-stroke:0.25px currentColor">Remote</div>
<div class="t" id="t84" style="left:482.00px;top:406px;line-height:12px;font-size:11.5px;font-weight:400;color:#006bb8;letter-spacing:0.123px;-webkit-text-stroke:0.15px currentColor;">[Copy] Timeslice Metric Remote Kevin</div>
<div class="t" id="t85" style="left:750.00px;top:407px;line-height:11px;font-size:9.9px;font-weight:700;color:#1a1c21;letter-spacing:-0.283px;">prod</div>
<div class="t" id="t86" style="left:807.50px;top:406px;line-height:12px;font-size:11.5px;font-weight:400;color:#4a4e58;letter-spacing:0.044px;-webkit-text-stroke:0.15px currentColor;">host.name:</div>
<div class="t" id="t87" style="left:868.00px;top:406px;line-height:12px;font-size:11.5px;font-weight:700;color:#343741;letter-spacing:0.176px;text-decoration:underline;text-underline-offset:2px">gke-edge-lite-oblt-edge-lite-oblt-poo-eeb26d4a-m5dn</div>
<div class="t" id="t88" style="left:1313.60px;top:406px;line-height:12px;font-size:11.5px;font-weight:400;color:#4a4e58;letter-spacing:0.199px;-webkit-text-stroke:0.15px currentColor;">99.00%</div>
<div class="t" id="t89" style="left:1390.00px;top:406px;line-height:12px;font-size:11.5px;font-weight:400;color:#4a4e58;letter-spacing:0.198px;-webkit-text-stroke:0.15px currentColor;">93.856%</div>
<div class="t" id="t90" style="left:1570.40px;top:406px;line-height:12px;font-size:11.5px;font-weight:400;color:#4a4e58;letter-spacing:0.446px;-webkit-text-stroke:0.15px currentColor;">-514.355%</div>
<div class="t" id="t91" style="left:239.60px;top:439px;line-height:11px;font-size:9.9px;font-weight:400;color:#000;letter-spacing:0.151px;-webkit-text-stroke:0.25px currentColor">No data</div>
<div class="t" id="t92" style="left:294.90px;top:439px;line-height:11px;font-size:9.9px;font-weight:400;color:#000;letter-spacing:0.064px;-webkit-text-stroke:0.25px currentColor">Remote</div>
<div class="t" id="t93" style="left:482.00px;top:438px;line-height:12px;font-size:11.5px;font-weight:400;color:#006bb8;letter-spacing:0.123px;-webkit-text-stroke:0.15px currentColor;">[Copy] Timeslice Metric Remote Kevin</div>
<div class="t" id="t94" style="left:750.00px;top:439px;line-height:11px;font-size:9.9px;font-weight:700;color:#1a1c21;letter-spacing:-0.283px;">prod</div>
<div class="t" id="t95" style="left:807.50px;top:438px;line-height:12px;font-size:11.5px;font-weight:400;color:#4a4e58;letter-spacing:0.044px;-webkit-text-stroke:0.15px currentColor;">host.name:</div>
<div class="t" id="t96" style="left:868.00px;top:438px;line-height:12px;font-size:11.5px;font-weight:700;color:#343741;letter-spacing:0.003px;">_other-0</div>
<div class="t" id="t97" style="left:1313.60px;top:438px;line-height:12px;font-size:11.5px;font-weight:400;color:#4a4e58;letter-spacing:0.199px;-webkit-text-stroke:0.15px currentColor;">99.00%</div>
<div class="t" id="t98" style="left:1390.00px;top:438px;line-height:12px;font-size:11.5px;font-weight:400;color:#4a4e58;-webkit-text-stroke:0.15px currentColor;">N/A</div>
<div class="t" id="t99" style="left:1570.40px;top:438px;line-height:12px;font-size:11.5px;font-weight:400;color:#4a4e58;-webkit-text-stroke:0.15px currentColor;">N/A</div>
<div class="t" id="t100" style="left:239.60px;top:471px;line-height:11px;font-size:9.9px;font-weight:400;color:#000;letter-spacing:0.151px;-webkit-text-stroke:0.25px currentColor">No data</div>
<div class="t" id="t101" style="left:294.90px;top:471px;line-height:11px;font-size:9.9px;font-weight:400;color:#000;letter-spacing:0.064px;-webkit-text-stroke:0.25px currentColor">Remote</div>
<div class="t" id="t102" style="left:482.00px;top:470px;line-height:12px;font-size:11.5px;font-weight:400;color:#006bb8;letter-spacing:0.123px;-webkit-text-stroke:0.15px currentColor;">[Copy] Timeslice Metric Remote Kevin</div>
<div class="t" id="t103" style="left:750.00px;top:471px;line-height:11px;font-size:9.9px;font-weight:700;color:#1a1c21;letter-spacing:-0.283px;">prod</div>
<div class="t" id="t104" style="left:807.50px;top:470px;line-height:12px;font-size:11.5px;font-weight:400;color:#4a4e58;letter-spacing:0.044px;-webkit-text-stroke:0.15px currentColor;">host.name:</div>
<div class="t" id="t105" style="left:868.00px;top:470px;line-height:12px;font-size:11.5px;font-weight:700;color:#343741;letter-spacing:-0.283px;">_other-1</div>
<div class="t" id="t106" style="left:1313.60px;top:470px;line-height:12px;font-size:11.5px;font-weight:400;color:#4a4e58;letter-spacing:0.199px;-webkit-text-stroke:0.15px currentColor;">99.00%</div>
<div class="t" id="t107" style="left:1390.00px;top:470px;line-height:12px;font-size:11.5px;font-weight:400;color:#4a4e58;-webkit-text-stroke:0.15px currentColor;">N/A</div>
<div class="t" id="t108" style="left:1570.40px;top:470px;line-height:12px;font-size:11.5px;font-weight:400;color:#4a4e58;-webkit-text-stroke:0.15px currentColor;">N/A</div>
<div class="t" id="t109" style="left:239.60px;top:503px;line-height:11px;font-size:9.9px;font-weight:400;color:#000;letter-spacing:0.151px;-webkit-text-stroke:0.25px currentColor">No data</div>
<div class="t" id="t110" style="left:294.90px;top:503px;line-height:11px;font-size:9.9px;font-weight:400;color:#000;letter-spacing:0.064px;-webkit-text-stroke:0.25px currentColor">Remote</div>
<div class="t" id="t111" style="left:482.00px;top:502px;line-height:12px;font-size:11.5px;font-weight:400;color:#006bb8;letter-spacing:0.123px;-webkit-text-stroke:0.15px currentColor;">[Copy] Timeslice Metric Remote Kevin</div>
<div class="t" id="t112" style="left:750.00px;top:503px;line-height:11px;font-size:9.9px;font-weight:700;color:#1a1c21;letter-spacing:-0.283px;">prod</div>
<div class="t" id="t113" style="left:807.50px;top:502px;line-height:12px;font-size:11.5px;font-weight:400;color:#4a4e58;letter-spacing:0.044px;-webkit-text-stroke:0.15px currentColor;">host.name:</div>
<div class="t" id="t114" style="left:868.00px;top:502px;line-height:12px;font-size:11.5px;font-weight:700;color:#343741;letter-spacing:0.095px;">auditbeat-f8sj4</div>
<div class="t" id="t115" style="left:1313.60px;top:502px;line-height:12px;font-size:11.5px;font-weight:400;color:#4a4e58;letter-spacing:0.199px;-webkit-text-stroke:0.15px currentColor;">99.00%</div>
<div class="t" id="t116" style="left:1390.00px;top:502px;line-height:12px;font-size:11.5px;font-weight:400;color:#4a4e58;-webkit-text-stroke:0.15px currentColor;">N/A</div>
<div class="t" id="t117" style="left:1570.40px;top:502px;line-height:12px;font-size:11.5px;font-weight:400;color:#4a4e58;-webkit-text-stroke:0.15px currentColor;">N/A</div>
<div class="t" id="t118" style="left:239.60px;top:535px;line-height:11px;font-size:9.9px;font-weight:400;color:#000;letter-spacing:0.151px;-webkit-text-stroke:0.25px currentColor">No data</div>
<div class="t" id="t119" style="left:294.90px;top:535px;line-height:11px;font-size:9.9px;font-weight:400;color:#000;letter-spacing:0.064px;-webkit-text-stroke:0.25px currentColor">Remote</div>
<div class="t" id="t120" style="left:482.00px;top:534px;line-height:12px;font-size:11.5px;font-weight:400;color:#006bb8;letter-spacing:0.123px;-webkit-text-stroke:0.15px currentColor;">[Copy] Timeslice Metric Remote Kevin</div>
<div class="t" id="t121" style="left:750.00px;top:535px;line-height:11px;font-size:9.9px;font-weight:700;color:#1a1c21;letter-spacing:-0.283px;">prod</div>
<div class="t" id="t122" style="left:807.50px;top:534px;line-height:12px;font-size:11.5px;font-weight:400;color:#4a4e58;letter-spacing:0.044px;-webkit-text-stroke:0.15px currentColor;">host.name:</div>
<div class="t" id="t123" style="left:868.00px;top:534px;line-height:12px;font-size:11.5px;font-weight:700;color:#343741;letter-spacing:0.156px;">auditbeat-fj547</div>
<div class="t" id="t124" style="left:1313.60px;top:534px;line-height:12px;font-size:11.5px;font-weight:400;color:#4a4e58;letter-spacing:0.199px;-webkit-text-stroke:0.15px currentColor;">99.00%</div>
<div class="t" id="t125" style="left:1390.00px;top:534px;line-height:12px;font-size:11.5px;font-weight:400;color:#4a4e58;-webkit-text-stroke:0.15px currentColor;">N/A</div>
<div class="t" id="t126" style="left:1570.40px;top:534px;line-height:12px;font-size:11.5px;font-weight:400;color:#4a4e58;-webkit-text-stroke:0.15px currentColor;">N/A</div>
<div class="t" id="t127" style="left:239.60px;top:567px;line-height:11px;font-size:9.9px;font-weight:400;color:#000;letter-spacing:0.151px;-webkit-text-stroke:0.25px currentColor">No data</div>
<div class="t" id="t128" style="left:294.90px;top:567px;line-height:11px;font-size:9.9px;font-weight:400;color:#000;letter-spacing:0.064px;-webkit-text-stroke:0.25px currentColor">Remote</div>
<div class="t" id="t129" style="left:482.00px;top:566px;line-height:12px;font-size:11.5px;font-weight:400;color:#006bb8;letter-spacing:0.123px;-webkit-text-stroke:0.15px currentColor;">[Copy] Timeslice Metric Remote Kevin</div>
<div class="t" id="t130" style="left:750.00px;top:567px;line-height:11px;font-size:9.9px;font-weight:700;color:#1a1c21;letter-spacing:-0.283px;">prod</div>
<div class="t" id="t131" style="left:807.50px;top:566px;line-height:12px;font-size:11.5px;font-weight:400;color:#4a4e58;letter-spacing:0.044px;-webkit-text-stroke:0.15px currentColor;">host.name:</div>
<div class="t" id="t132" style="left:868.00px;top:566px;line-height:12px;font-size:11.5px;font-weight:700;color:#343741;letter-spacing:-0.001px;">auditbeat-gmmv4</div>
<div class="t" id="t133" style="left:1313.60px;top:566px;line-height:12px;font-size:11.5px;font-weight:400;color:#4a4e58;letter-spacing:0.199px;-webkit-text-stroke:0.15px currentColor;">99.00%</div>
<div class="t" id="t134" style="left:1390.00px;top:566px;line-height:12px;font-size:11.5px;font-weight:400;color:#4a4e58;-webkit-text-stroke:0.15px currentColor;">N/A</div>
<div class="t" id="t135" style="left:1570.40px;top:566px;line-height:12px;font-size:11.5px;font-weight:400;color:#4a4e58;-webkit-text-stroke:0.15px currentColor;">N/A</div>
<div class="t" id="t136" style="left:239.60px;top:599px;line-height:11px;font-size:9.9px;font-weight:400;color:#000;letter-spacing:0.151px;-webkit-text-stroke:0.25px currentColor">No data</div>
<div class="t" id="t137" style="left:294.90px;top:599px;line-height:11px;font-size:9.9px;font-weight:400;color:#000;letter-spacing:0.064px;-webkit-text-stroke:0.25px currentColor">Remote</div>
<div class="t" id="t138" style="left:482.00px;top:598px;line-height:12px;font-size:11.5px;font-weight:400;color:#006bb8;letter-spacing:0.123px;-webkit-text-stroke:0.15px currentColor;">[Copy] Timeslice Metric Remote Kevin</div>
<div class="t" id="t139" style="left:750.00px;top:599px;line-height:11px;font-size:9.9px;font-weight:700;color:#1a1c21;letter-spacing:-0.283px;">prod</div>
<div class="t" id="t140" style="left:807.50px;top:598px;line-height:12px;font-size:11.5px;font-weight:400;color:#4a4e58;letter-spacing:0.044px;-webkit-text-stroke:0.15px currentColor;">host.name:</div>
<div class="t" id="t141" style="left:868.00px;top:598px;line-height:12px;font-size:11.5px;font-weight:700;color:#343741;letter-spacing:-0.019px;">auditbeat-hrlgl</div>
<div class="t" id="t142" style="left:1313.60px;top:598px;line-height:12px;font-size:11.5px;font-weight:400;color:#4a4e58;letter-spacing:0.199px;-webkit-text-stroke:0.15px currentColor;">99.00%</div>
<div class="t" id="t143" style="left:1390.00px;top:598px;line-height:12px;font-size:11.5px;font-weight:400;color:#4a4e58;-webkit-text-stroke:0.15px currentColor;">N/A</div>
<div class="t" id="t144" style="left:1570.40px;top:598px;line-height:12px;font-size:11.5px;font-weight:400;color:#4a4e58;-webkit-text-stroke:0.15px currentColor;">N/A</div>
<div class="t" id="t145" style="left:239.60px;top:631px;line-height:11px;font-size:9.9px;font-weight:400;color:#000;letter-spacing:0.151px;-webkit-text-stroke:0.25px currentColor">No data</div>
<div class="t" id="t146" style="left:294.90px;top:631px;line-height:11px;font-size:9.9px;font-weight:400;color:#000;letter-spacing:0.064px;-webkit-text-stroke:0.25px currentColor">Remote</div>
<div class="t" id="t147" style="left:482.00px;top:630px;line-height:12px;font-size:11.5px;font-weight:400;color:#006bb8;letter-spacing:0.123px;-webkit-text-stroke:0.15px currentColor;">[Copy] Timeslice Metric Remote Kevin</div>
<div class="t" id="t148" style="left:750.00px;top:631px;line-height:11px;font-size:9.9px;font-weight:700;color:#1a1c21;letter-spacing:-0.283px;">prod</div>
<div class="t" id="t149" style="left:807.50px;top:630px;line-height:12px;font-size:11.5px;font-weight:400;color:#4a4e58;letter-spacing:0.044px;-webkit-text-stroke:0.15px currentColor;">host.name:</div>
<div class="t" id="t150" style="left:868.00px;top:630px;line-height:12px;font-size:11.5px;font-weight:700;color:#343741;letter-spacing:0.108px;">auditbeat-jh49p</div>
<div class="t" id="t151" style="left:1313.60px;top:630px;line-height:12px;font-size:11.5px;font-weight:400;color:#4a4e58;letter-spacing:0.199px;-webkit-text-stroke:0.15px currentColor;">99.00%</div>
<div class="t" id="t152" style="left:1390.00px;top:630px;line-height:12px;font-size:11.5px;font-weight:400;color:#4a4e58;-webkit-text-stroke:0.15px currentColor;">N/A</div>
<div class="t" id="t153" style="left:1570.40px;top:630px;line-height:12px;font-size:11.5px;font-weight:400;color:#4a4e58;-webkit-text-stroke:0.15px currentColor;">N/A</div>
<div class="t" id="t154" style="left:232.70px;top:672px;line-height:11px;font-size:10.3px;font-weight:400;color:#343741;letter-spacing:-0.258px;-webkit-text-stroke:0.15px currentColor;">Rows per page: 10</div>
<div class="t" id="t155" style="left:1805.80px;top:671px;line-height:12px;font-size:11.3px;font-weight:700;color:#006bb8;text-decoration:underline;text-underline-offset:1.5px">1</div>
<div class="t" id="t156" style="left:1823.90px;top:671px;line-height:12px;font-size:11.3px;font-weight:400;color:#343741;-webkit-text-stroke:0.35px currentColor">2</div>
<div class="t" id="t157" style="left:1843.50px;top:671px;line-height:12px;font-size:11.3px;font-weight:400;color:#343741;-webkit-text-stroke:0.35px currentColor">3</div>
<div class="t" id="t158" style="left:1863.00px;top:671px;line-height:12px;font-size:11.3px;font-weight:400;color:#343741;-webkit-text-stroke:0.35px currentColor">4</div>
<div class="t" id="t159" style="left:1882.50px;top:671px;line-height:12px;font-size:11.3px;font-weight:400;color:#343741;-webkit-text-stroke:0.35px currentColor">5</div>
<div class="t" id="t160" style="left:1901.90px;top:671px;line-height:12px;font-size:11.3px;font-weight:400;color:#98a1b3;-webkit-text-stroke:0.15px currentColor;">...</div>
<div class="t" id="t161" style="left:1923.00px;top:671px;line-height:12px;font-size:11.3px;font-weight:400;color:#343741;letter-spacing:0.119px;-webkit-text-stroke:0.35px currentColor">154</div>
<div class="t" id="t162" style="left:219.50px;top:722px;line-height:11px;font-size:10.3px;font-weight:400;color:#343741;letter-spacing:-0.178px;-webkit-text-stroke:0.15px currentColor;">Rows per page: 25</div>
<div class="t" id="t163" style="left:1949.60px;top:722px;line-height:12px;font-size:11.3px;font-weight:700;color:#006bb8;text-decoration:underline;text-underline-offset:1.5px">1</div>
</body></html>
